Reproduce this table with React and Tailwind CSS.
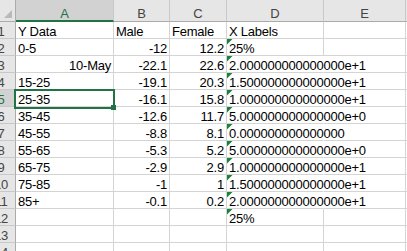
const font = { fontFamily: '"Liberation Sans", Arial, sans-serif' }

const cols = [
  { key: 'A', w: 'w-[98px]' },
  { key: 'B', w: 'w-[56px]' },
  { key: 'C', w: 'w-[57px]' },
  { key: 'D', w: 'w-[97px]' },
  { key: 'E', w: 'w-[82px]' },
]

// [A, A right-aligned?, B, C, D]
const rows = [
  ['Y Data', false, 'Male', 'Female', 'X Labels'],
  ['0-5', false, '-12', '12.2', '25%'],
  ['10-May', true, '-22.1', '22.6', '2.000000000000000e+1'],
  ['15-25', false, '-19.1', '20.3', '1.500000000000000e+1'],
  ['25-35', false, '-16.1', '15.8', '1.000000000000000e+1'],
  ['35-45', false, '-12.6', '11.7', '5.000000000000000e+0'],
  ['45-55', false, '-8.8', '8.1', '0.000000000000000'],
  ['55-65', false, '-5.3', '5.2', '5.000000000000000e+0'],
  ['65-75', false, '-2.9', '2.9', '1.000000000000000e+1'],
  ['75-85', false, '-1', '1', '1.500000000000000e+1'],
  ['85+', false, '-0.1', '0.2', '2.000000000000000e+1'],
  ['', false, '', '', '25%'],
  ['', false, '', '', ''],
  ['', false, '', '', ''],
]

function Triangle() {
  return (
    <svg className="absolute left-0 top-0" width="6" height="6" viewBox="0 0 6 6">
      <polygon points="0,0 5.5,0 0,5.5" fill="#16843a" />
    </svg>
  )
}

function ColHeaders() {
  return (
    <div className="flex h-[22px] bg-[#e6e6e6]">
      <div className="relative w-[16px] shrink-0 border-r border-b border-[#ababab]">
        <svg className="absolute left-0 top-0" width="15" height="21" viewBox="0 0 15 21">
          <polygon points="12,10 12,18 4,18" fill="#b9b9b9" />
        </svg>
      </div>
      {cols.map(c => (
        <div
          key={c.key}
          className={`${c.w} shrink-0 border-r border-[#c8c8c8] text-center pt-[8px] leading-[11px] text-[13px] ${
            c.key === 'A'
              ? 'bg-[#d2d2d2] text-[#217346] border-b-2 border-b-[#217346]'
              : 'text-[#444] border-b border-b-[#ababab]'
          }`}
        >
          {c.key}
        </div>
      ))}
      <div className="flex-1 border-b border-[#ababab]" />
    </div>
  )
}

function Row({ n, data }) {
  const [a, aRight, b, c, d] = data
  const active = n === 5
  const overflow = d.length > 12
  const showTri = n >= 2 && d !== ''
  return (
    <div className="flex h-[17px] text-[13px] leading-[11px] tracking-[-0.23px] text-black">
      <div
        className={`w-[16px] shrink-0 overflow-hidden border-b border-[#c8c8c8] ${
          active ? 'bg-[#d2d2d2] border-r-2 border-r-[#217346] text-[#217346]' : 'bg-[#e6e6e6] border-r border-r-[#ababab] text-[#444]'
        }`}
      >
        <div className="w-[28px] -ml-[13px] text-center pt-[4px]">{n}</div>
      </div>
      <div className={`w-[98px] shrink-0 border-r border-b border-[#d4d4d4] pt-[4px] px-[2px] whitespace-nowrap ${aRight ? 'text-right' : ''}`}>
        {a}
      </div>
      <div className={`w-[56px] shrink-0 border-r border-b border-[#d4d4d4] pt-[4px] px-[2px] whitespace-nowrap ${n === 1 ? '' : 'text-right'}`}>
        {b}
      </div>
      <div className={`w-[57px] shrink-0 border-r border-b border-[#d4d4d4] pt-[4px] px-[2px] whitespace-nowrap ${n === 1 ? '' : 'text-right'}`}>
        {c}
      </div>
      <div
        className={`relative z-10 w-[97px] shrink-0 border-r border-b pt-[4px] pl-[2px] whitespace-nowrap ${
          overflow ? 'border-r-transparent border-b-[#d4d4d4]' : 'border-[#d4d4d4]'
        }`}
      >
        {d}
        {showTri && <Triangle />}
      </div>
      <div className="w-[82px] shrink-0 border-r border-b border-[#d4d4d4]" />
      <div className="flex-1 border-b border-[#d4d4d4]" />
    </div>
  )
}

export default function App() {
  return (
    <div className="relative w-[407px] h-[251px] overflow-hidden bg-white" style={font}>
      <ColHeaders />
      {rows.map((r, i) => (
        <Row key={i} n={i + 1} data={r} />
      ))}
      {/* active cell A5 */}
      <div className="absolute left-[14px] top-[89px] w-[101px] h-[20px] border-2 border-[#217346] z-20" />
      <div className="absolute left-[111px] top-[105px] w-[5px] h-[5px] bg-[#217346] z-20" />
    </div>
  )
}
